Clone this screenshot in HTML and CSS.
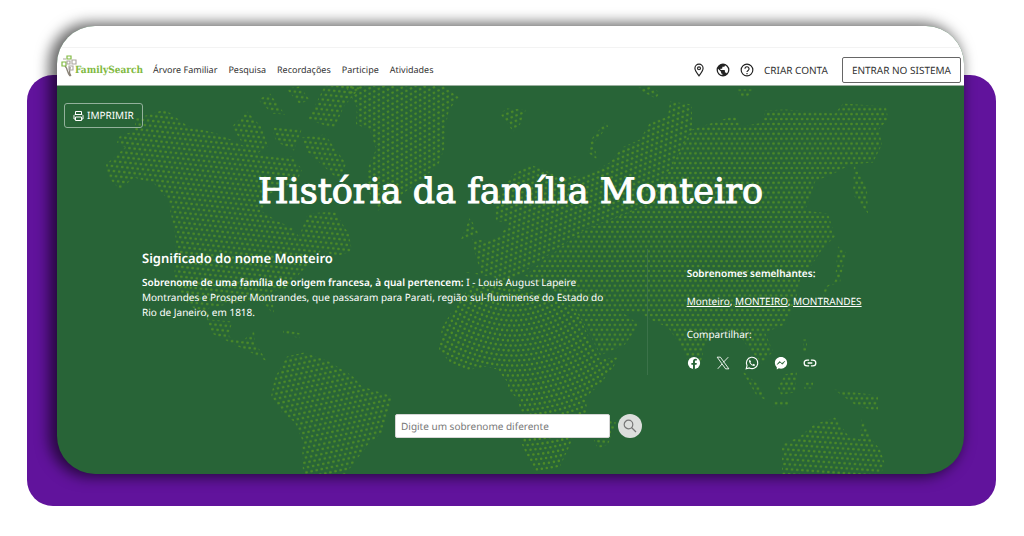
FILE: index.html
```
<!DOCTYPE html>
<html lang="pt">

<head>
    <meta charset="utf-8">
    <meta name="viewport" content="width=device-width, initial-scale=1">
    <title>História da família Monteiro</title>
    <link rel="stylesheet" href="styles.css">
</head>

<body>
    <div class="frame">
        <div class="card">
            <header class="top">
                <a class="logo" href="#">
                    <svg width="17" height="22" viewBox="0 0 17 22" fill="none">
                        <path d="M9 21C6 18 7 14 4 11M10 21C7 18 9 16 9 12" stroke="#8a8377" stroke-width="1.3" />
                        <path d="M6 1h4v3H6zM1 7h4v4H1z" stroke="#80b941" stroke-width="1.2" />
                        <path d="M2 4h3M6 6h3v3H6zM11 5h4v4h-4zM8 11h4v4H8z" stroke="#aaa59d" stroke-width="1.1" />
                    </svg>
                    <span>FamilySearch</span>
                </a>
                <nav class="menu">
                    <a href="#">Árvore Familiar</a>
                    <a href="#">Pesquisa</a>
                    <a href="#">Recordações</a>
                    <a href="#">Participe</a>
                    <a href="#">Atividades</a>
                </nav>
                <div class="account">
                    <a href="#" aria-label="Locais">
                        <svg width="14" height="14" viewBox="0 0 24 24" fill="none" stroke="#222" stroke-width="2">
                            <path d="M12 22C9 18 5 13.500 5 9a7 7 0 0 1 14 0c0 4.500-4 9-7 13z" />
                            <circle cx="12" cy="9" r="2.500" />
                        </svg>
                    </a>
                    <a href="#" aria-label="Idioma">
                        <svg width="14" height="14" viewBox="0 0 24 24" fill="#222">
                            <path d="M12 1a11 11 0 1 0 0 22 11 11 0 0 0 0-22zm-1.100 19.700A8.800 8.800 0 0 1 3.500 10l5.200 5.200v1.100c0 1.200 1 2.200 2.200 2.200zm7.600-2.800a2.200 2.200 0 0 0-2.100-1.500h-1.100v-3.300c0-.6-.5-1.100-1.100-1.100H7.600V9.800h2.200c.6 0 1.100-.5 1.100-1.100V6.500h2.200c1.200 0 2.200-1 2.200-2.200v-.5a8.800 8.800 0 0 1 3.200 14.100z" />
                        </svg>
                    </a>
                    <a href="#" aria-label="Ajuda">
                        <svg width="14" height="14" viewBox="0 0 24 24" fill="none" stroke="#222" stroke-width="2">
                            <circle cx="12" cy="12" r="10" />
                            <path d="M8.500 10a3.500 3.500 0 1 1 5.500 2.800c-1.300.9-2 1.400-2 2.700M12 17v2.200" />
                        </svg>
                    </a>
                    <a class="create" href="#">CRIAR CONTA</a>
                    <button class="login" type="button">ENTRAR NO SISTEMA</button>
                </div>
            </header>

            <main class="hero">
                <!-- dotted world map -->
                <svg class="map" viewBox="57 86 907 389" preserveAspectRatio="xMidYMid slice" aria-hidden="true">
                    <defs>
                        <pattern id="dots" width="5.200" height="9.800" patternUnits="userSpaceOnUse">
                            <circle cx="1.300" cy="2" r="1.300" />
                            <circle cx="3.900" cy="6.900" r="1.300" />
                        </pattern>
                        <pattern id="dotsAmerica" href="#dots" patternTransform="rotate(6)" />
                        <pattern id="dotsGreenland" href="#dots" patternTransform="rotate(-28)" />
                        <pattern id="dotsSouth" href="#dots" patternTransform="rotate(-12)" />
                        <pattern id="dotsEurope" href="#dots" patternTransform="rotate(-22)" />
                        <pattern id="dotsAustralia" href="#dots" patternTransform="rotate(4)" />
                        <clipPath id="africa">
                            <path d="M470 287L500 280 520 290 560 298 577 312 590 340 602 359 619 358 613 368 600 385 585 398 589 418 572 440 568 450 560 467 535 474 521 443 522 420 518 400 508 390 508 383 497 370 487 367 465 371 450 363 439 350 442 328 452 312z" />
                        </clipPath>
                    </defs>
                    <path fill="url(#dotsAmerica)" d="M106 165L125 148 117 143 120 136 134 132 136 119 165 110 187 126 220 135 245 147 268 157 292 157 302 170 297 182 268 195 262 212 278 222 292 228 299 237 308 214 335 212 349 235 352 252 335 257 322 250 298 276 285 289 272 292 274 316 266 306 258 302 235 303 208 309 208 320 232 322 229 337 242 342 254 331 255 343 267 362 253 354 234 345 212 334 205 318 188 304 174 285 176 240 168 200 154 184 134 178 120 190 108 178z
                        M232 127L247 112 262 128 268 147 255 155 242 143zM258 100L270 94 285 115 272 114zM272 128L302 129 294 151 276 142zM302 138L325 135 346 164 340 182 324 167 305 150zM286 89L300 87 310 101 299 104zM308 120L325 86 362 86 344 107 334 129zM284 330l17 4-2 5-16-6z" />
                    <path fill="url(#dotsGreenland)" d="M345 86L443 86 459 98 449 110 445 130 444 150 438 166 415 185 395 200 378 211 366 186 369 165 376 150 370 130 356 125 357 108z" />
                    <path fill="url(#dotsSouth)" d="M287 357L304 353 327 361 352 376 362 387 393 397 382 433 368 445 353 465 345 475 303 475 302 440 295 423 282 413 271 397 275 378z" />
                    <path fill="url(#dotsEurope)" d="M462 272L481 274 474 250 472 240 487 241 500 236 510 222 496 222 495 202 512 176 530 165 562 178 585 176 610 163 622 148 640 140 650 123 668 117 670 102 692 105 692 130 650 205 585 230 545 258 505 285 495 278zM461 240L470 218 479 235zM500 114L507 109 526 110 520 125 513 132zM588 153L591 140 606 122 608 127 594 143 597 160zM636 89L648 86 660 93 656 99z" />
                    <path fill="url(#dots)" d="M692 130L735 116 742 127 763 123 765 111 785 110 835 114 843 104 886 107 888 119 879 130 882 145 873 163 850 165 838 172 815 182 810 198 805 211 828 214 835 237 822 250 812 265 800 280 795 305 785 325 765 333 773 352 762 364 748 348 738 333 715 330 705 345 700 366 688 362 680 345 668 328 650 320 640 313 620 311 639 325 625 345 600 356 590 335 575 310 560 295 545 286 525 276 550 256 585 230 650 205z
                        M737 90h16l-6 8h-7zM854 163L867 190 868 214 853 195zM838 247l8 6-6 30-12 4-4 12-1-10 12-8zM741 370l18 16 9 16-12-7zM778 388l7-13 12-3-2 21-14 2zM773 401h16v6h-16zM804 383h9v6h-9zM803 340h4v12h-4zM834 390l44 6v16l-22-6z" />
                    <path fill="url(#dotsAustralia)" d="M782 445L800 437 814 425 835 418 848 436 860 440 862 418 872 440 880 450 885 465 879 478 782 478zM594 441l14-20 8 2-8 22-10 4z" />
                    <g id="rings" clip-path="url(#africa)"></g>
                </svg>

                <button class="print" type="button">
                    <svg width="11" height="12" viewBox="0 0 22 22" fill="none" stroke="#fff" stroke-width="2">
                        <path d="M5 8V2h12v6M5 17H2V10l2-2h14l2 2v7h-3M5 13h12v7H5z" />
                    </svg>
                    IMPRIMIR
                </button>
                <h1>História da família Monteiro</h1>

                <div class="columns">
                    <section class="meaning">
                        <h2>Significado do nome Monteiro</h2>
                        <p><b>Sobrenome de uma família de origem francesa, à qual pertencem:</b> I - Louis August Lapeire Montrandes e Prosper Montrandes, que passaram para Parati, região sul-fluminense do Estado do Rio de Janeiro, em 1818.</p>
                    </section>
                    <aside class="similar">
                        <h3>Sobrenomes semelhantes:</h3>
                        <p><a href="#">Monteiro</a>, <a href="#">MONTEIRO</a>, <a href="#">MONTRANDES</a></p>
                        <p>Compartilhar:</p>
                        <div class="share">
                            <a href="#" aria-label="Facebook">
                                <svg width="14" height="14" viewBox="0 0 24 24">
                                    <circle cx="12" cy="12" r="10.500" fill="#fff" />
                                    <path d="M10.300 23v-8H7.500v-3.200h2.800V9.400c0-2.900 1.700-4.500 4.300-4.500l2.300.2v2.700h-1.500c-1.300 0-1.800.8-1.800 1.700v2.300h3.200l-.5 3.200h-2.700v8z" fill="#286437" />
                                </svg>
                            </a>
                            <a href="#" aria-label="X">
                                <svg width="14" height="14" viewBox="0 0 24 24" fill="none" stroke="#fff" stroke-width="1.500">
                                    <path d="M2 2h5.500L22 22h-5.500zM21 2l-8.500 9M10.500 13.500L3 22" />
                                </svg>
                            </a>
                            <a href="#" aria-label="WhatsApp">
                                <svg width="14" height="14" viewBox="0 0 24 24">
                                    <path d="M2 22l1.500-5.500A9.800 9.800 0 1 1 7.500 20.500z" fill="none" stroke="#fff" stroke-width="1.900" />
                                    <path d="M8.500 6.500c-1.200.6-1.900 2-1.300 3.700 1 3 3.500 5.600 6.600 6.700 1.700.5 3.200-.3 3.500-2l-2.900-1.500-1.300 1.400c-1.800-.8-3-2-3.800-3.700l1-1.300z" fill="#fff" />
                                </svg>
                            </a>
                            <a href="#" aria-label="Messenger">
                                <svg width="14" height="14" viewBox="0 0 24 24">
                                    <path d="M12 1.500C6 1.500 1.500 5.900 1.500 11.700c0 3 1.200 5.600 3.300 7.500V23l3.500-1.800c1.200.4 2.400.5 3.700.5 6 0 10.500-4.300 10.500-10S18 1.500 12 1.500z" fill="#fff" />
                                    <path d="M5.500 14.500l4-5 4 3.500 5-4-4 5-4-3.500z" fill="#286437" stroke="#286437" />
                                </svg>
                            </a>
                            <a href="#" aria-label="Copiar link">
                                <svg width="14" height="14" viewBox="0 0 24 24" fill="none" stroke="#fff" stroke-width="2.200">
                                    <path d="M10.500 7H7a5 5 0 0 0 0 10h3.500M13.500 7H17a5 5 0 0 1 0 10h-3.500M8 12h8" />
                                </svg>
                            </a>
                        </div>
                    </aside>
                </div>

                <form class="search">
                    <input type="text" placeholder="Digite um sobrenome diferente" aria-label="Digite um sobrenome diferente">
                    <button type="button" aria-label="Pesquisar">
                        <svg width="14" height="14" viewBox="0 0 14 14" fill="none" stroke="#777" stroke-width="1.200">
                            <circle cx="5.500" cy="5.500" r="4.300" />
                            <path d="M8.500 8.500l4.500 4.500" />
                        </svg>
                    </button>
                </form>
            </main>
        </div>
    </div>

    <script>
        // the dots of Africa lie on arcs
        const rings = document.getElementById("rings")
        for (let r = 20; r < 245; r += 5) {
            const ring = document.createElementNS("http://www.w3.org/2000/svg", "circle")
            ring.setAttribute("cx", 513)
            ring.setAttribute("cy", 236)
            ring.setAttribute("r", r)
            rings.appendChild(ring)
        }
    </script>
</body>

</html>
```
FILE: styles.css
```
* {
    box-sizing: border-box;
}

body {
    margin: 0;
    background-color: white;
    font-family: "Noto Sans", sans-serif;
    font-size: 10px;
    line-height: 15px;
    text-rendering: geometricPrecision;
    color: #333;
}

h1, h2, h3, p {
    margin: 0;
}

a {
    color: inherit;
    text-decoration: none;
}

b {
    font-weight: 600;
}

button, input {
    font: inherit;
    text-rendering: inherit;
}

svg {
    display: block;
}

.frame {
    display: flow-root;
    margin: 75px 28px 30px 27px;
    padding: 0 32px 32px 30px;
    background-color: #61139c;
    border-radius: 26px;
}

.card {
    margin-top: -49px;
    overflow: hidden;
    border-radius: 38px;
    background-color: #286437;
    box-shadow: -5px 0 14px 3px rgba(0, 0, 0, 0.6);
}

.top {
    display: flex;
    align-items: center;
    height: 60px;
    padding: 21px 3px 0 4px;
    background: linear-gradient(#f3f3f3, #f3f3f3) 0 21px / 100% 1px no-repeat white;
    border-bottom: 1px solid #9bb09f;
}

.logo {
    display: flex;
    align-items: center;
    height: 32px;
    margin-right: 10px;
    font-family: "DejaVu Serif Condensed", "DejaVu Serif", serif;
    font-size: 10px;
    font-weight: bold;
    color: #80b941;
}

.logo svg {
    margin: 0 -3px 0 0;
}

.logo span {
    margin-top: 8px;
}

.menu {
    display: flex;
    gap: 11px;
    margin-top: 6px;
    font-size: 9px;
}

.account {
    display: flex;
    align-items: center;
    gap: 10px;
    margin: 8px 0 0 auto;
}

.create {
    margin-right: 4px;
}

.login {
    height: 26px;
    padding: 0 9px;
    border: 1px solid #666;
    border-radius: 2px;
    background-color: white;
    color: #333;
}

.hero {
    position: relative;
    padding: 17px 7px 36px;
    color: white;
}

.map {
    position: absolute;
    inset: 0;
    width: 100%;
    height: 100%;
    fill: #4c8a27;
}

#rings {
    fill: none;
    stroke: #4c8a27;
    stroke-width: 2.6px;
    stroke-linecap: round;
    stroke-dasharray: 0 5;
}

.print, .hero h1, .columns, .search {
    position: relative;
}

.print {
    display: flex;
    align-items: center;
    gap: 3px;
    height: 25px;
    padding: 0 8px;
    border: 1px solid #93b19b;
    border-radius: 3px;
    background: none;
    color: white;
}

.hero h1 {
    margin-top: 39px;
    font-family: "DejaVu Serif", serif;
    font-size: 35px;
    font-weight: normal;
    line-height: 50px;
    text-align: center;
    -webkit-text-stroke: 1px white;
}

.columns {
    display: grid;
    grid-template-columns: 504fr 232fr;
    margin: 32px 78px 0;
}

.meaning {
    padding-right: 36px;
}

.meaning h2 {
    margin-bottom: 8px;
    font-size: 13px;
    font-weight: 600;
    line-height: 18px;
}

.similar {
    padding: 17px 0 5px 39px;
    border-left: 1px solid #3b7249;
}

.similar h3 {
    font-size: 10px;
    font-weight: 600;
}

.similar p {
    margin-top: 13px;
}

.similar p + p {
    margin: 18px 0 14px;
}

.similar p a {
    text-decoration: underline;
}

.share {
    display: flex;
    gap: 15px;
}

.search {
    display: flex;
    justify-content: center;
    gap: 8px;
    margin: 39px 0 0 16px;
}

.search input {
    width: 215px;
    height: 24px;
    padding: 0 5px;
    border: 1px solid #d5d5d5;
    border-radius: 2px;
    background-color: white;
}

.search input::placeholder {
    color: #777;
}

.search button {
    display: grid;
    place-items: center;
    width: 24px;
    height: 24px;
    padding: 0;
    border: 0;
    border-radius: 50%;
    background-color: #dcdedc;
}
```
